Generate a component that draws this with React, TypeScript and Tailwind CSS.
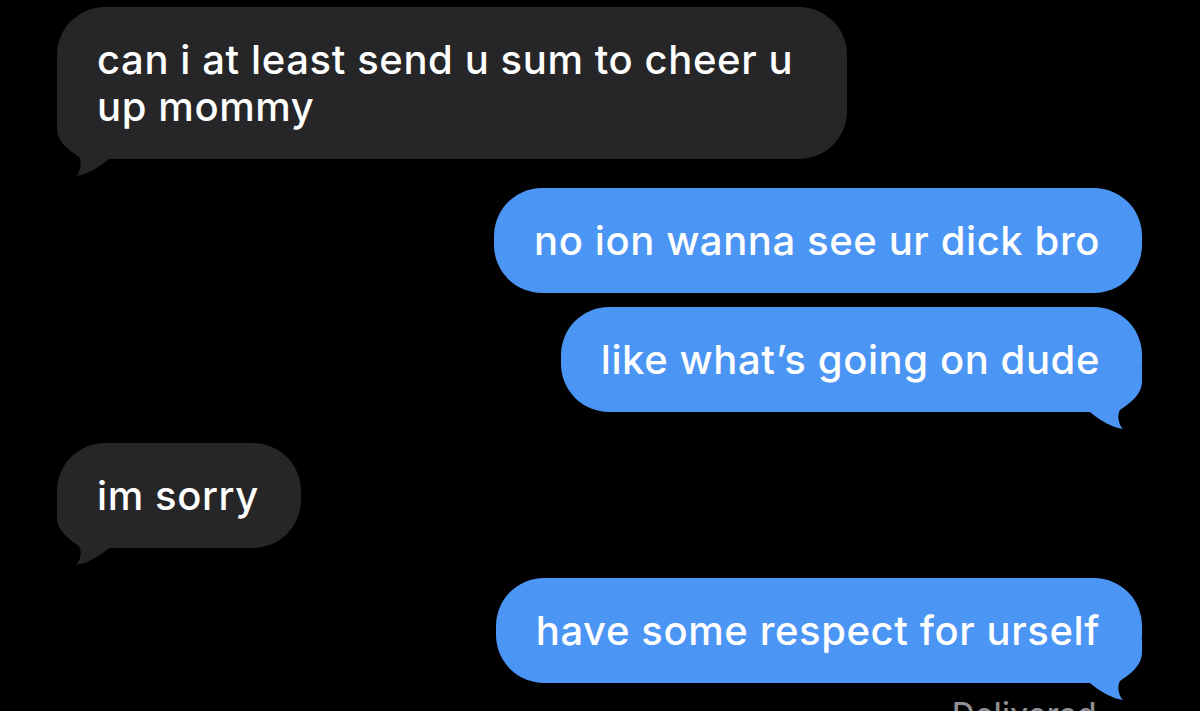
import React from 'react';

type Message = {
  text: string;
  fromMe: boolean;
  gap: string;
  wide?: boolean;
};

const MESSAGES: Message[] = [
  { text: 'can i at least send u sum to cheer u up mommy', fromMe: false, gap: 'mt-0', wide: true },
  { text: 'no ion wanna see ur dick bro', fromMe: true, gap: 'mt-[29px]' },
  { text: 'like what’s going on dude', fromMe: true, gap: 'mt-[14px]' },
  { text: 'im sorry', fromMe: false, gap: 'mt-[31px]' },
  { text: 'have some respect for urself', fromMe: true, gap: 'mt-[30px]' },
];

function Tail({ fromMe, color }: { fromMe: boolean; color: string }) {
  // drawn for the right-hand side, mirrored for incoming bubbles
  return (
    <svg
      viewBox="0 0 60 62"
      className={
        fromMe
          ? 'absolute -right-[4px] -bottom-[19px] w-[60px] h-[62px]'
          : 'absolute -left-[4px] -bottom-[19px] w-[60px] h-[62px] -scale-x-100'
      }
    >
      <path
        d="M0 0 L56 0 L56 12 C56 26 44 34 34 41 C31 46 32 55 37 60 C28 59 14 52 4 43 L0 43 Z"
        fill={color}
      />
    </svg>
  );
}

function Bubble({ msg, tail }: { msg: Message; tail: boolean }) {
  const color = msg.fromMe ? '#4b95f5' : '#262628';
  return (
    <div className={`flex ${msg.fromMe ? 'justify-end' : 'justify-start'} ${msg.gap}`}>
      <div
        className={`relative rounded-[48px] py-[29px] pl-[40px] pr-[42px] text-[40px] leading-[47px] tracking-[0.6px] font-medium text-white ${
          msg.fromMe ? 'bg-[#4b95f5]' : 'bg-[#262628]'
        } ${msg.wide ? 'max-w-[790px]' : ''}`}
      >
        {tail && <Tail fromMe={msg.fromMe} color={color} />}
        <span className="relative">{msg.text}</span>
      </div>
    </div>
  );
}

export default function App() {
  return (
    <div
      className="w-[1200px] h-[711px] overflow-hidden bg-black pt-[7px] pl-[57px] pr-[58px] flex flex-col"
      style={{ fontFamily: 'Inter, "Noto Sans", sans-serif' }}
    >
      {MESSAGES.map((msg, i) => {
        const next = MESSAGES[i + 1];
        const tail = !next || next.fromMe !== msg.fromMe;
        return <Bubble key={i} msg={msg} tail={tail} />;
      })}
      <div className="flex justify-end mt-[13px] pr-[45px]">
        <span className="text-[31px] leading-[36px] tracking-[0.5px] font-medium text-[#8e8e93]">Delivered</span>
      </div>
    </div>
  );
}
